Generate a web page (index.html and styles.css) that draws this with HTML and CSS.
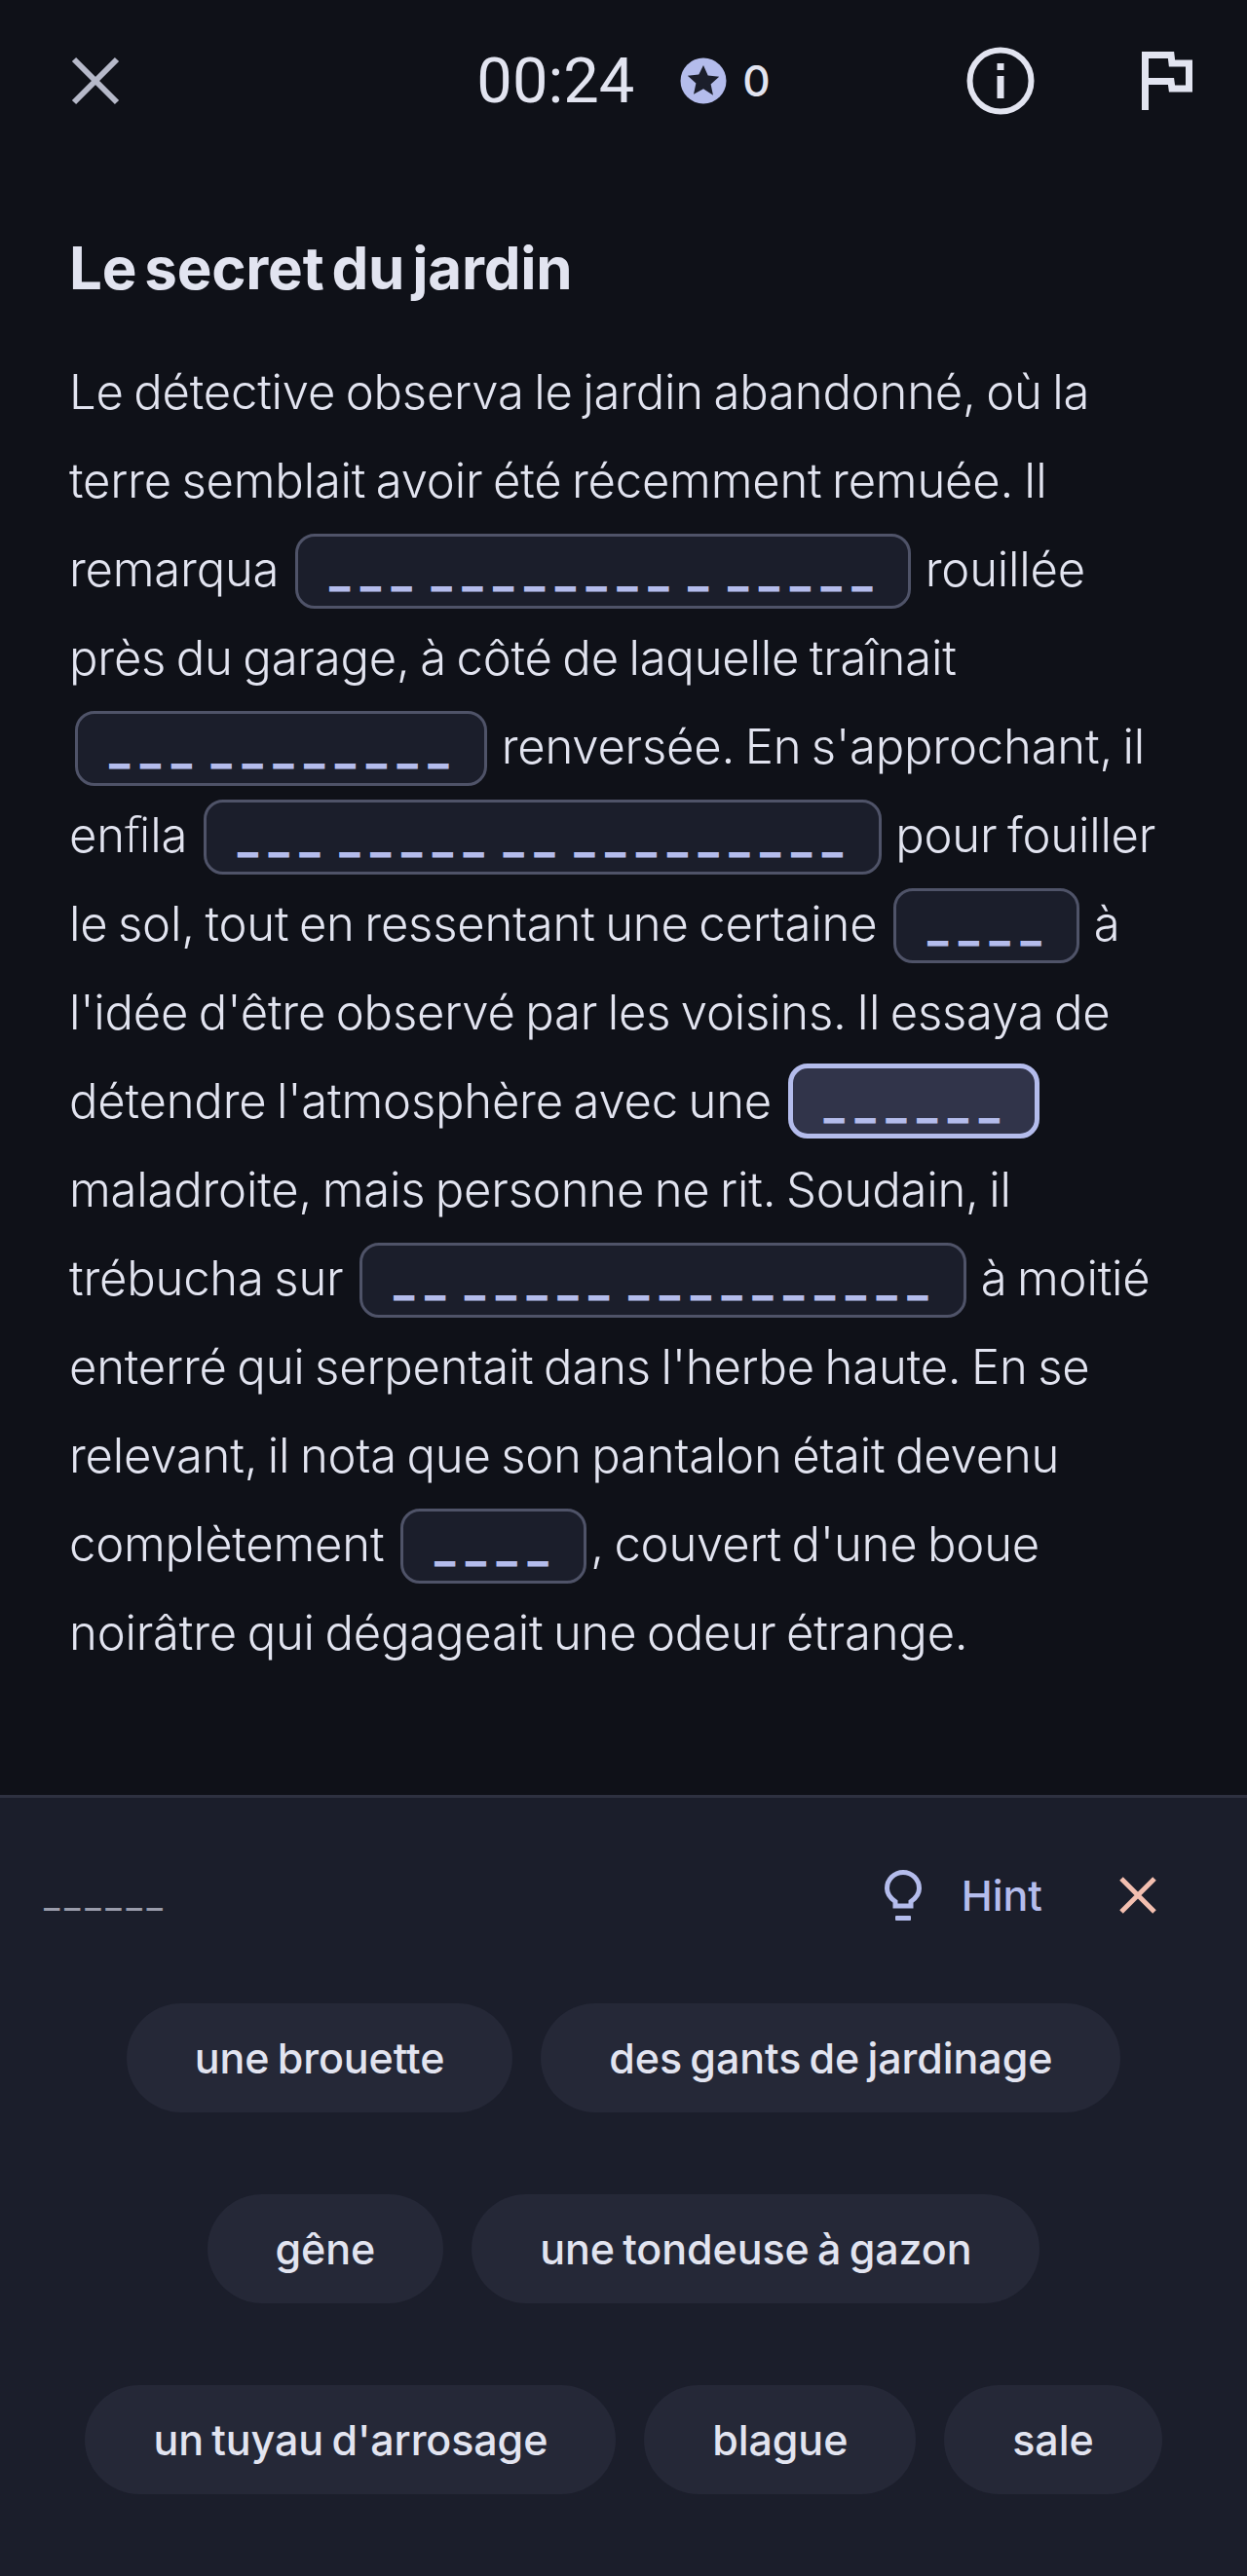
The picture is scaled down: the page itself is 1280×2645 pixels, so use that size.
FILE: index.html
```html
<!DOCTYPE html>
<html lang="fr">
<head>
    <meta charset="UTF-8">
    <meta name="viewport" content="width=device-width, initial-scale=1.0">
    <title>Le secret du jardin</title>
    <link rel="stylesheet" href="styles.css">
</head>
<body>
    <div class="app">
        <header class="topbar">
            <button class="icon-btn close-btn" aria-label="Close">
                <svg viewBox="0 0 50 50" width="50" height="50"><path d="M3 3L47 47M47 3L3 47" fill="none" stroke="#b6b9c9" stroke-width="6"/></svg>
            </button>
            <div class="stats">
                <span class="timer">00:24</span>
                <svg class="star" viewBox="0 0 48 48" width="48" height="48"><circle cx="24" cy="24" r="23.5" fill="#b4bcec"/><path d="M24 8l4.7 10.6 11.5 1.2-8.6 7.7 2.4 11.3L24 32.3l-10 5.5 2.4-11.3-8.6-7.7 11.5-1.2z" fill="#1b1e2b"/></svg>
                <span class="score">0</span>
            </div>
            <div class="actions">
                <svg viewBox="0 0 70 70" width="70" height="70"><circle cx="35" cy="35" r="31.5" fill="none" stroke="#e2e4f0" stroke-width="6"/><rect x="31.500" y="17" width="7" height="7" fill="#e2e4f0"/><rect x="31.500" y="30" width="7" height="23" fill="#e2e4f0"/></svg>
                <svg viewBox="0 0 52 60" width="52" height="60"><path d="M3.500 60V3.500H30L31 12H48.500V38H31L30 30.500H3.500" fill="none" stroke="#e2e4f0" stroke-width="7"/></svg>
            </div>
        </header>

        <main class="passage">
            <h1>Le secret du jardin</h1>
            <p>
                Le détective observa le jardin abandonné, où la<br>
                terre semblait avoir été récemment remuée. Il<br>
                remarqua <span class="blank">___ ________ _ _____</span> rouillée<br>
                près du garage, à côté de laquelle traînait<br>
                <span class="blank">___ ________</span> renversée. En s'approchant, il<br>
                enﬁla <span class="blank">___ _____ __ _________</span> pour fouiller<br>
                le sol, tout en ressentant une certaine <span class="blank">____</span> à<br>
                l'idée d'être observé par les voisins. Il essaya de<br>
                détendre l'atmosphère avec une <span class="blank active">______</span><br>
                maladroite, mais personne ne rit. Soudain, il<br>
                trébucha sur <span class="blank">__ _____ __________</span> à moitié<br>
                enterré qui serpentait dans l'herbe haute. En se<br>
                relevant, il nota que son pantalon était devenu<br>
                complètement <span class="blank">____</span>, couvert d'une boue<br>
                noirâtre qui dégageait une odeur étrange.
            </p>
        </main>

        <section class="panel">
            <div class="panel-head">
                <span class="current">______</span>
                <button class="hint">
                    <svg viewBox="0 0 38 52" width="38" height="52"><path d="M11 37v-4.500C6 29 2.500 25 2.500 19a16.500 16.500 0 0 1 33 0c0 6-3.500 10-8.500 13.500V37z" fill="none" stroke="#b4bcec" stroke-width="5"/><rect x="11" y="47" width="16" height="5" rx="1" fill="#b4bcec"/></svg>
                    <span>Hint</span>
                </button>
                <button class="icon-btn clear-btn" aria-label="Clear">
                    <svg viewBox="0 0 38 38" width="38" height="38"><path d="M2 2L36 36M36 2L2 36" fill="none" stroke="#f3bfb0" stroke-width="5"/></svg>
                </button>
            </div>
            <div class="chips">
                <button class="chip">une brouette</button>
                <button class="chip">des gants de jardinage</button>
                <button class="chip">gêne</button>
                <button class="chip">une tondeuse à gazon</button>
                <button class="chip">un tuyau d'arrosage</button>
                <button class="chip">blague</button>
                <button class="chip">sale</button>
            </div>
        </section>
    </div>
</body>
</html>
```

FILE: styles.css
```css
* {
    box-sizing: border-box;
}
body {
    margin: 0;
    background-color: #0f1118;
    font-family: Inter, "Noto Sans", sans-serif;
    color: #e2e4f0;
}
button {
    font-family: inherit;
    border: none;
    background: none;
    padding: 0;
    color: inherit;
}
svg {
    display: block;
    flex: none;
}
.app {
    min-height: 2645px;
    display: flex;
    flex-direction: column;
}
.topbar {
    display: grid;
    grid-template-columns: 1fr auto 1fr;
    align-items: center;
    height: 166px;
    padding: 0 56px;
}
.close-btn {
    margin-left: 17px;
    justify-self: start;
}
.stats {
    display: flex;
    align-items: center;
}
.timer {
    font-family: Roboto, sans-serif;
    font-size: 65px;
    margin-right: 47px;
}
.score {
    font-size: 44px;
    font-weight: 500;
    margin-left: 16px;
}
.actions {
    display: flex;
    align-items: center;
    justify-content: flex-end;
    gap: 110px;
}
.passage {
    padding: 0 71px;
}
h1 {
    font-size: 60px;
    font-weight: 700;
    letter-spacing: -0.2px;
    word-spacing: -6px;
    line-height: 70px;
    margin: 74px 0 47px;
}
p {
    margin: 0;
    font-size: 49px;
    font-weight: 300;
    letter-spacing: -0.2px;
    word-spacing: -3px;
    line-height: 91px;
    white-space: nowrap;
}
.blank {
    display: inline-block;
    height: 77px;
    margin: 0 4px 0 6px;
    padding: 0 26px 0 32px;
    border: 3px solid #4f5368;
    border-radius: 20px;
    background-color: #1b1e2b;
    color: #b4bcec;
    font-size: 44px;
    font-weight: 800;
    letter-spacing: 10.500px;
    word-spacing: -11px;
    line-height: 71px;
}
.blank.active {
    border: 5px solid #b4bcec;
    background-color: #31344a;
}
.panel {
    margin-top: auto;
    height: 802px;
    background-color: #1b1e2b;
    border-top: 3px solid #2e3140;
}
.panel-head {
    display: flex;
    align-items: center;
    height: 130px;
    margin-top: 35px;
    padding: 0 93px 0 45px;
}
.current {
    font-size: 36px;
    letter-spacing: 4.700px;
    color: #9a9cab;
    margin-right: auto;
}
.hint {
    display: flex;
    align-items: center;
    gap: 41px;
    margin-right: 79px;
    font-size: 43px;
    font-weight: 500;
    color: #b4bcec;
}
.chips {
    display: flex;
    flex-wrap: wrap;
    justify-content: center;
    gap: 84px 29px;
    padding: 46px 40px 0;
}
.chip {
    height: 112px;
    padding: 0 70px;
    border-radius: 56px;
    background-color: #252837;
    font-size: 43px;
    font-weight: 500;
    letter-spacing: -0.1px;
    word-spacing: -3px;
}
```
